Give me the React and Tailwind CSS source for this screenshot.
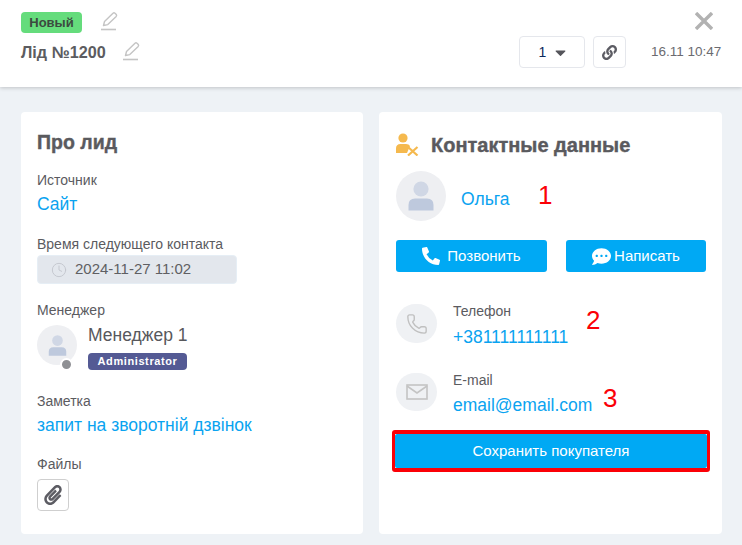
import React from 'react'
import { Clock, Phone } from 'lucide-react'
import { FaPhoneAlt, FaCommentDots, FaPaperclip, FaLink, FaCaretDown } from 'react-icons/fa'

function EditIcon({ className }) {
  return (
    <svg className={className} width="20" height="20" viewBox="0 0 20 20" fill="none" stroke="#c4c4c4">
      <path d="M4.5 14.5 L5.5 10.5 L14 2.2 Q15 1.4 16 2.2 L17.3 3.5 Q18 4.5 17.2 5.4 L8.8 13.6 Z" strokeWidth="1.4" strokeLinejoin="round" />
      <path d="M2 18.5 H17" strokeWidth="1.6" />
    </svg>
  )
}

function UserGlyph({ size }) {
  return (
    <svg width={size} height={size} viewBox="0 0 26 30">
      <circle cx="13" cy="8" r="7.6" fill="#d0d7e5" />
      <path d="M0.5 29.5 V24 Q0.5 17.5 7 17.5 H19 Q25.5 17.5 25.5 24 V29.5 Z" fill="#bec9dd" />
    </svg>
  )
}

function Label({ children, className = '' }) {
  return <div className={`text-[14px] leading-[16px] text-[#5b5b5f] ${className}`}>{children}</div>
}

function Value({ children, className = '' }) {
  return <div className={`text-[17.5px] leading-[20px] text-[#0aa3f0] ${className}`}>{children}</div>
}

function LeftCard() {
  return (
    <div className="w-[342px] bg-white rounded-[4px] px-4 pt-[19px]">
      <div className="text-[19.5px] leading-[22px] font-bold text-[#5a5a5e] [-webkit-text-stroke:0.4px_#5a5a5e]">Про лид</div>

      <Label className="mt-[19px]">Источник</Label>
      <Value className="mt-[6px]">Сайт</Value>

      <Label className="mt-[22px]">Время следующего контакта</Label>
      <div className="mt-[3px] w-[200px] h-[29px] flex items-center bg-[#e3e7ed] border border-[#e6eef5] rounded-[4px] pl-[13px] text-[#5f5f63] text-[15px]">
        <Clock size={16} strokeWidth={1.4} className="text-[#c3c6ce] mr-2" />
        2024-11-27 11:02
      </div>

      <Label className="mt-[18px]">Менеджер</Label>
      <div className="mt-[7px] flex">
        <div className="relative w-10 h-10 rounded-full bg-[#eeeff2] flex items-center justify-center">
          <UserGlyph size={21} />
          <span className="absolute right-[4px] bottom-[-6px] w-[13px] h-[13px] rounded-full bg-[#8f9094] border-2 border-white" />
        </div>
        <div className="ml-[11px]">
          <div className="text-[17.5px] leading-[20px] text-[#58585c]">Менеджер 1</div>
          <div className="mt-2 w-[99px] h-[17px] flex items-center justify-center rounded-[4px] bg-[#545a94] text-white text-[11px] font-bold tracking-[0.6px]">Administrator</div>
        </div>
      </div>

      <Label className="mt-[23px]">Заметка</Label>
      <Value className="mt-[6px]">запит на зворотній дзвінок</Value>

      <Label className="mt-[21px]">Файлы</Label>
      <div className="mt-[7px] w-8 h-8 flex items-center justify-center border border-[#cfcfcf] rounded-[4px]">
        <FaPaperclip size={20} className="text-[#5c5c63]" />
      </div>
    </div>
  )
}

function ContactRow({ icon, label, value, className = '', circleClass = '', valueClass = '' }) {
  return (
    <div className={`flex ${className}`}>
      <div className={`w-[41px] rounded-full bg-[#eff1f4] flex items-center justify-center ${circleClass}`}>{icon}</div>
      <div className="ml-4">
        <Label className="-mt-[1px]">{label}</Label>
        <Value className={valueClass}>{value}</Value>
      </div>
    </div>
  )
}

function RightCard() {
  return (
    <div className="relative w-[343px] bg-white rounded-[4px] px-[17px] pt-[21px]">
      <div className="flex items-center">
        <svg width="23" height="23" viewBox="0 0 23 23" fill="#f5b94e">
          <circle cx="7" cy="5" r="4.6" />
          <path d="M0 20 V15.5 Q0 11 4.5 11 H10 Q13 11 14 13 L11 20 Z" />
          <path d="M12 14 L21.5 22.5 M21.5 14 L12 22.5" stroke="#f5b94e" strokeWidth="2.2" />
        </svg>
        <span className="ml-[12px] text-[20px] leading-[22px] font-bold text-[#5a5a5e] [-webkit-text-stroke:0.4px_#5a5a5e]">Контактные данные</span>
      </div>

      <div className="mt-[15px] flex items-center">
        <div className="w-[50px] h-[50px] rounded-full bg-[#eeeff2] flex items-center justify-center">
          <UserGlyph size={30} />
        </div>
        <Value className="ml-[15px] mt-[6px]">Ольга</Value>
      </div>

      <div className="mt-[19px] flex justify-between w-[310px]">
        <button className="w-[151px] h-8 rounded-[3px] bg-[#00a9f4] text-white text-[15px] flex items-center justify-center">
          <FaPhoneAlt size={18} className="mr-[7px]" />
          Позвонить
        </button>
        <button className="w-[140px] h-8 rounded-[3px] bg-[#00a9f4] text-white text-[15px] flex items-center justify-center">
          <FaCommentDots size={19} className="mr-[3px]" />
          Написать
        </button>
      </div>

      <ContactRow
        className="mt-8"
        circleClass="h-[39px]"
        valueClass="mt-2"
        icon={<Phone size={22} strokeWidth={1.5} className="text-[#c0c0c0]" />}
        label="Телефон"
        value="+381111111111"
      />
      <ContactRow
        className="mt-[26px]"
        circleClass="h-[38px]"
        valueClass="mt-[7px]"
        icon={
          <svg width="22" height="16" viewBox="0 0 22 16" fill="none" stroke="#c4c4c4" strokeWidth="1.6">
            <rect x="1" y="1" width="20" height="14" />
            <path d="M1 2 L11 9 L21 2" />
          </svg>
        }
        label="E-mail"
        value="email@email.com"
      />

      <div className="mt-[15px] -mx-1 w-[318px] border-x-[3px] border-y-[4px] border-[#fb0007] rounded-[3px]">
        <button className="w-full h-[34px] rounded-[2px] bg-[#00a9f4] text-white text-[15px] flex items-center justify-center">Сохранить покупателя</button>
      </div>

      {/* numbers drawn on top of the screenshot */}
      <span className="absolute left-[159px] top-[69px] text-[26px] leading-[28px] text-[#fb0007]">1</span>
      <span className="absolute left-[207px] top-[194px] text-[26px] leading-[28px] text-[#fb0007]">2</span>
      <span className="absolute left-[224px] top-[272px] text-[26px] leading-[28px] text-[#fb0007]">3</span>
    </div>
  )
}

export default function App() {
  return (
    <div className="w-[742px] h-[545px] overflow-hidden bg-[#eef2f6] font-['Liberation_Sans',Arial,sans-serif]">
      <div className="h-[87px] bg-white shadow-[0_1px_4px_rgba(0,0,0,0.2)] flex justify-between pl-[21px] pr-5">
        <div>
          <div className="mt-3 flex items-center">
            <span className="w-[61px] h-[21px] flex items-center justify-center rounded-[4px] bg-[#65dc7c] text-[#3c4a40] text-[13px] font-bold">Новый</span>
            <EditIcon className="ml-[17px] -mt-[3px]" />
          </div>
          <div className="mt-[10px] flex items-center">
            <span className="text-[16.2px] leading-[18px] font-bold text-[#5c5c60]">Лід №1200</span>
            <EditIcon className="ml-[15px] -mt-[3px]" />
          </div>
        </div>
        <div className="flex flex-col items-end">
          <svg className="mt-3 mr-[9px]" width="18" height="18" viewBox="0 0 18 18" stroke="#b2b2b2" strokeWidth="3.4">
            <path d="M1 1 L17 17 M17 1 L1 17" />
          </svg>
          <div className="mt-[6px] flex items-center">
            <div className="w-[66px] h-8 border border-[#e5e7ec] rounded-[4px] flex items-center justify-center pl-1 text-[#0d2a5c] text-[14px]">
              1
              <FaCaretDown size={17} className="ml-[6px] text-[#55555b]" />
            </div>
            <div className="ml-2 w-[33px] h-8 border border-[#e5e7ec] rounded-[4px] flex items-center justify-center">
              <FaLink size={15} className="text-[#5c5c63]" />
            </div>
            <span className="ml-[25px] text-[13.5px] text-[#6b6b70] w-[71px] whitespace-nowrap">16.11 10:47</span>
          </div>
        </div>
      </div>
      <div className="mt-[25px] ml-[21px] h-[422px] flex gap-4">
        <LeftCard />
        <RightCard />
      </div>
    </div>
  )
}
